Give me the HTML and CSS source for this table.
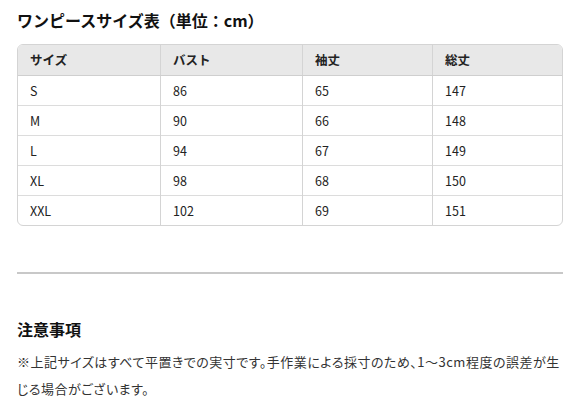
FILE: index.html
```html
<!DOCTYPE html>
<html lang="ja">
<head>
<meta charset="utf-8">
<link rel="stylesheet" href="styles.css">
</head>
<body>
<main class="page">
  <h2 class="title">ワンピースサイズ表（単位：cm）</h2>
  <div class="table-wrap">
    <table class="size-table">
      <thead>
        <tr><th>サイズ</th><th>バスト</th><th>袖丈</th><th>総丈</th></tr>
      </thead>
      <tbody>
        <tr><td>S</td><td>86</td><td>65</td><td>147</td></tr>
        <tr><td>M</td><td>90</td><td>66</td><td>148</td></tr>
        <tr><td>L</td><td>94</td><td>67</td><td>149</td></tr>
        <tr><td>XL</td><td>98</td><td>68</td><td>150</td></tr>
        <tr><td>XXL</td><td>102</td><td>69</td><td>151</td></tr>
      </tbody>
    </table>
  </div>
  <hr class="divider">
  <h3 class="notes-title">注意事項</h3>
  <p class="notes">※上記サイズはすべて平置きでの実寸です。手作業による採寸のため、1〜3cm程度の誤差が生じる場合がございます。</p>
</main>
</body>
</html>
```
FILE: styles.css
```css
html, body {
  margin: 0;
  padding: 0;
  background: #fff;
}
body {
  font-family: "Noto Sans CJK JP", "Noto Sans", sans-serif;
  color: #222;
}
.page {
  padding: 8px 7px 0 17px;
}
.title {
  margin: 0;
  font-size: 16px;
  font-weight: 700;
  line-height: 24px;
  color: #111;
}
.table-wrap {
  margin-top: 12px;
  border: 1px solid #d4d4d4;
  border-radius: 6px;
  overflow: hidden;
}
.size-table {
  width: 100%;
  border-collapse: collapse;
  font-size: 12.5px;
}
.size-table th,
.size-table td {
  text-align: left;
  padding: 0 12px;
  height: 29px;
  line-height: 18px;
  border-left: 1px solid #d4d4d4;
  border-top: 1px solid #dcdcdc;
}
.size-table th:first-child,
.size-table td:first-child {
  border-left: none;
}
.size-table thead th {
  border-top: none;
  background: #e8e8e8;
  font-weight: 700;
  height: 30px;
  border-bottom: 1px solid #cfcfcf;
  color: #222;
}
.size-table th:nth-child(1) { width: 118px; }
.size-table th:nth-child(2) { width: 117px; }
.size-table th:nth-child(3) { width: 105px; }
.divider {
  margin: 46px 0 0;
  border: none;
  border-top: 2px solid #c8c8c8;
}
.notes-title {
  margin: 43px 0 0;
  font-size: 16px;
  font-weight: 700;
  line-height: 24px;
  color: #111;
}
.notes {
  margin: 7px 0 0;
  font-size: 13px;
  line-height: 27px;
  color: #333;
  font-feature-settings: "palt";
  letter-spacing: 0.5px;
}
```
